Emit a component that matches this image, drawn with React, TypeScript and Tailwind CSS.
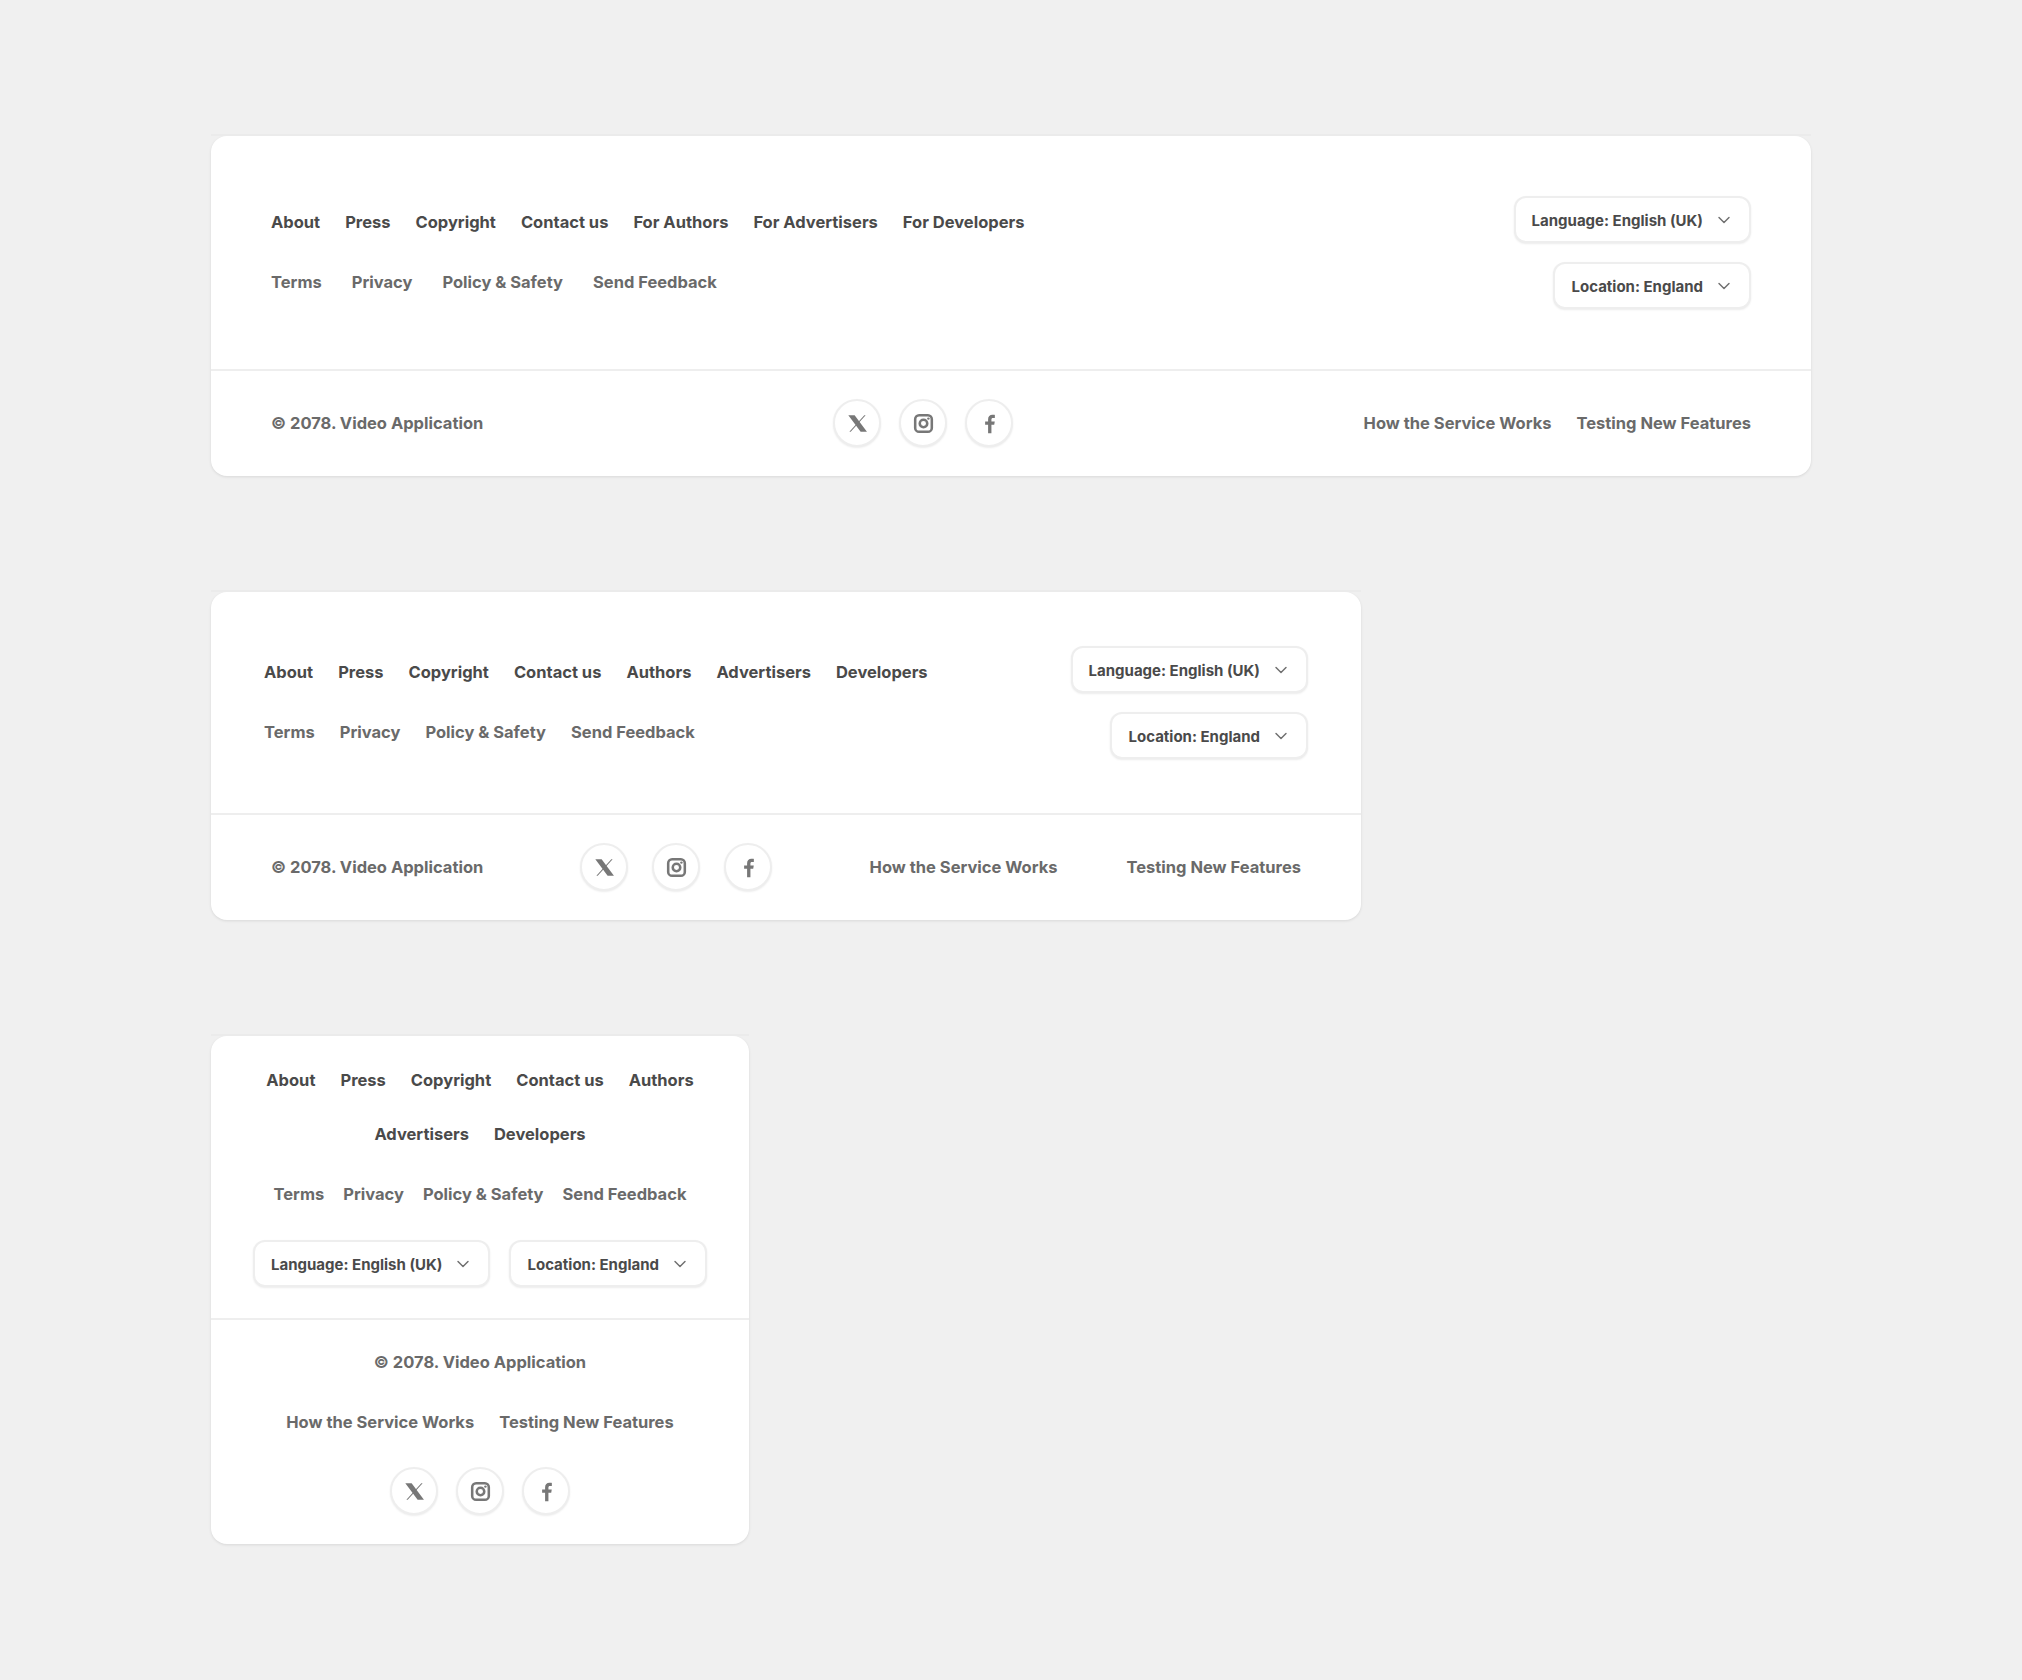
import { ChevronDown } from 'lucide-react'

const Select = ({ label }: { label: string }) => (
  <div className="flex h-[47px] items-center gap-[11px] rounded-[12px] border-2 border-[#eeeeee] bg-white pl-[16px] pr-[15px] shadow-[0_1px_2px_rgba(0,0,0,0.08)] text-[15px] font-bold leading-none text-[#4a4a4a]">
    <span className="pt-px">{label}</span>
    <ChevronDown size={20} strokeWidth={1.75} className="text-[#707070]" />
  </div>
)

const XIcon = () => (
  <svg viewBox="0 0 24 24" className="size-[21px]" fill="currentColor">
    <path d="M1.500 2.500H8.700L22.800 21.500H15.600Z" />
    <path d="M19.800 2.500h1.500L4.200 21.500H2.700Z" />
  </svg>
)

const InstagramIcon = () => (
  <svg viewBox="0 0 24 24" className="size-[21px]" fill="none" stroke="currentColor" strokeWidth="2.900">
    <rect x="2.500" y="2.500" width="19" height="19" rx="4.500" />
    <circle cx="12" cy="12" r="4.300" />
    <circle cx="17.600" cy="6.400" r="1.400" fill="currentColor" stroke="none" />
  </svg>
)

const FacebookIcon = () => (
  <svg viewBox="0 0 24 24" className="size-[21px]" fill="currentColor">
    <path d="M14.200 23v-9.500h3.200l.6-3.800h-3.800V7.500c0-1.100.4-1.800 1.900-1.800h2V2.200c-.4-.1-1.500-.2-2.800-.2-2.900 0-4.900 1.800-4.900 5v2.700H7v3.800h3.400V23h3.800Z" />
  </svg>
)

const Social = ({ gap }: { gap: string }) => (
  <div className={`flex items-center ${gap} text-[#777777]`}>
    {[XIcon, InstagramIcon, FacebookIcon].map((Icon, i) => (
      <div
        key={i}
        className="flex size-[48px] items-center justify-center rounded-full border-2 border-[#eeeeee] bg-white shadow-[0_1px_2px_rgba(0,0,0,0.08)]"
      >
        <Icon />
      </div>
    ))}
  </div>
)

const Links = ({ items, className }: { items: string[]; className: string }) => (
  <div className={className}>
    {items.map((t) => (
      <span key={t} className="whitespace-nowrap">
        {t}
      </span>
    ))}
  </div>
)

const Card = ({ className, children }: { className: string; children: React.ReactNode }) => (
  <div className={`relative rounded-[16px] bg-white shadow-[0_1px_3px_rgba(0,0,0,0.1)] ${className}`}>
    {/* pale strip that sits on the top edge */}
    <div className="absolute -top-[2px] left-0 right-0 h-[2px] bg-[#ebebeb]" />
    {children}
  </div>
)

const legal = ['Terms', 'Privacy', 'Policy & Safety', 'Send Feedback']
const info = ['How the Service Works', 'Testing New Features']
const copyright = '© 2078. Video Application'

const primary = 'flex gap-[25px] text-[16.5px] font-bold leading-[24px] text-[#4a4a4a]'
const secondary = 'flex text-[16.5px] font-bold leading-[24px] text-[#6a6a6a]'

export default function App() {
  return (
    <div className="flex min-h-[1680px] flex-col items-start gap-[116px] bg-[#f0f0f0] px-[211px] py-[136px] font-['Inter',sans-serif]">
      <Card className="w-[1600px]">
        <div className="flex justify-between border-b-2 border-[#eeeeee] px-[60px] pb-[60px] pt-[60px]">
          <div className="flex flex-col gap-[36px] pt-[14px]">
            <Links
              items={['About', 'Press', 'Copyright', 'Contact us', 'For Authors', 'For Advertisers', 'For Developers']}
              className={primary}
            />
            <Links items={legal} className={`${secondary} gap-[30px]`} />
          </div>
          <div className="flex flex-col items-end gap-[19px]">
            <Select label="Language: English (UK)" />
            <Select label="Location: England" />
          </div>
        </div>
        <div className="flex items-center justify-between px-[60px] pb-[29px] pt-[28px] text-[16.5px] font-bold leading-[24px] text-[#6a6a6a]">
          <span>{copyright}</span>
          <Social gap="gap-[18px]" />
          <Links items={info} className={`${secondary} gap-[25px]`} />
        </div>
      </Card>

      <Card className="w-[1150px]">
        <div className="flex justify-between border-b-2 border-[#eeeeee] px-[53px] pb-[54px] pt-[54px]">
          <div className="flex flex-col gap-[36px] pt-[14px]">
            <Links
              items={['About', 'Press', 'Copyright', 'Contact us', 'Authors', 'Advertisers', 'Developers']}
              className={primary}
            />
            <Links items={legal} className={`${secondary} gap-[25px]`} />
          </div>
          <div className="flex flex-col items-end gap-[19px]">
            <Select label="Language: English (UK)" />
            <Select label="Location: England" />
          </div>
        </div>
        <div className="flex items-center justify-between px-[60px] pb-[29px] pt-[28px] text-[16.5px] font-bold leading-[24px] text-[#6a6a6a]">
          <span>{copyright}</span>
          <Social gap="gap-[24px]" />
          <Links items={info} className={`${secondary} gap-[69px]`} />
        </div>
      </Card>

      <Card className="w-[538px]">
        <div className="flex flex-col items-center border-b-2 border-[#eeeeee] pb-[31px] pt-[32px]">
          <Links items={['About', 'Press', 'Copyright', 'Contact us', 'Authors']} className={primary} />
          <Links items={['Advertisers', 'Developers']} className={`${primary} mt-[30px]`} />
          <Links items={legal} className={`${secondary} mt-[36px] gap-[19px]`} />
          <div className="mt-[34px] flex gap-[19px]">
            <Select label="Language: English (UK)" />
            <Select label="Location: England" />
          </div>
        </div>
        <div className="flex flex-col items-center pb-[29px] pt-[30px] text-[16.5px] font-bold leading-[24px] text-[#6a6a6a]">
          <span>{copyright}</span>
          <Links items={info} className={`${secondary} mt-[36px] gap-[25px]`} />
          <div className="mt-[33px]">
            <Social gap="gap-[18px]" />
          </div>
        </div>
      </Card>
    </div>
  )
}
